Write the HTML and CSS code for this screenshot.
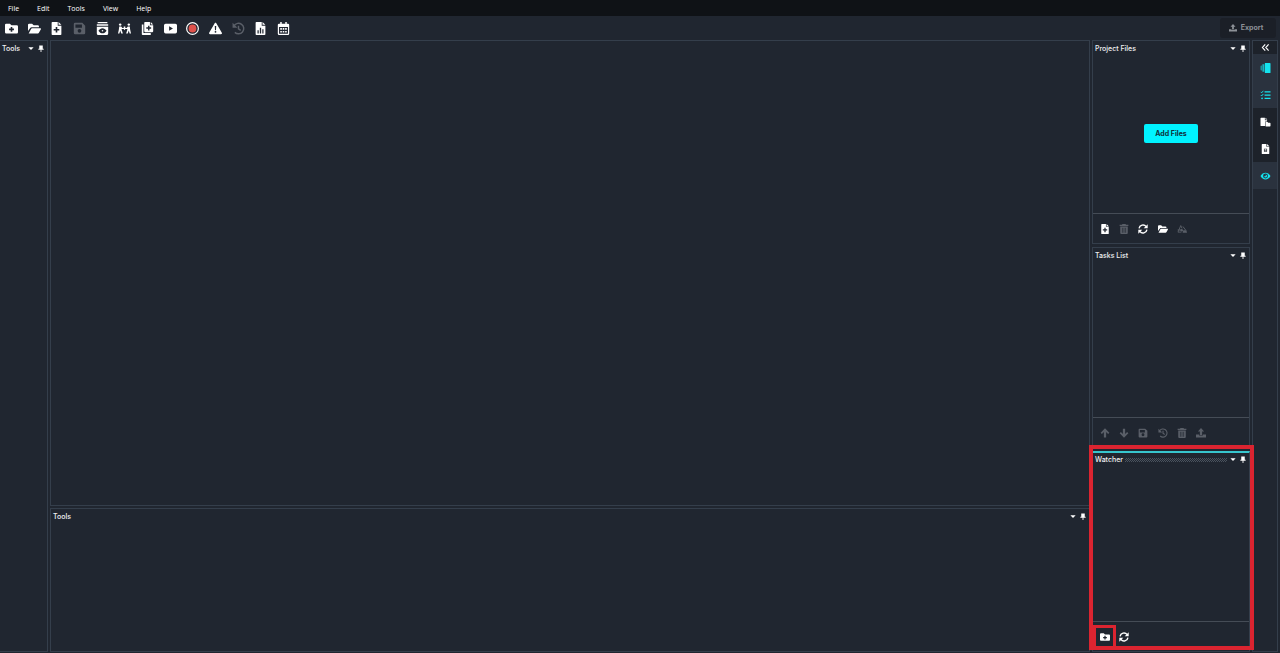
FILE: index.html
```html
<!DOCTYPE html>
<html lang="en">
<head>
    <meta charset="UTF-8">
    <meta name="viewport" content="width=device-width, initial-scale=1.0">
    <title>Workspace</title>
    <link rel="stylesheet" href="styles.css">
</head>
<body>
    <!-- Icon set -->
    <svg class="sprite" aria-hidden="true">
        <symbol id="folder-plus" viewBox="0 0 16 16"><path fill-rule="evenodd" d="M1.500 2H6l2 2h6.500A1.500 1.500 0 0 1 16 5.500v7a1.500 1.500 0 0 1-1.500 1.500h-13A1.500 1.500 0 0 1 0 12.500v-9A1.500 1.500 0 0 1 1.500 2zM7 6v2H5v2h2v2h2v-2h2V8H9V6z"/></symbol>
        <symbol id="folder-open" viewBox="0 0 16 16"><path d="M0 11V3.500A1.500 1.500 0 0 1 1.500 2H5l2 2h5a1.500 1.500 0 0 1 1.500 1.500V6.500H4.500A2 2 0 0 0 2.700 7.500zM.8 14l3-5.500a1.500 1.500 0 0 1 1.200-.8h10.300c.6 0 .9.600.6 1.100l-2.500 4.500a1.500 1.500 0 0 1-1.200.7z"/></symbol>
        <symbol id="file-plus" viewBox="0 0 16 16"><path fill-rule="evenodd" d="M2 1a1 1 0 0 1 1-1h6.500v4.500H14V15a1 1 0 0 1-1 1H3a1 1 0 0 1-1-1zM7 6v2.500H4.500v2H7V13h2v-2.500h2.500v-2H9V6zM10.500 0L14 3.500h-3.500z"/></symbol>
        <symbol id="save" viewBox="0 0 16 16"><path fill-rule="evenodd" d="M2.500 1h9L15 4.500v9a1.500 1.500 0 0 1-1.500 1.500h-11A1.500 1.500 0 0 1 1 13.500v-11A1.500 1.500 0 0 1 2.500 1zM3 3v4h8V3zM8 8.500a2.300 2.300 0 1 0 0 4.600 2.300 2.300 0 0 0 0-4.600z"/></symbol>
        <symbol id="archive-eye" viewBox="0 0 16 16"><path fill-rule="evenodd" d="M2 0h12v1.500H2zM1 2.700h14v1.800H1zM1 5.700h14V14a2 2 0 0 1-2 2H3a2 2 0 0 1-2-2zM3 10.700c2.500 4.200 7.500 4.200 10 0-2.500-4.200-7.500-4.200-10 0z"/><circle cx="8" cy="10.700" r="1"/></symbol>
        <symbol id="people" viewBox="0 0 16 16"><circle cx="2.700" cy="3.200" r="1.500"/><circle cx="13.300" cy="3.200" r="1.500"/><path d="M1.500 5.500h2.400l1.600 1.800H7V5.500h2v1.800h1.500l1.600-1.800h2.400l.5 4 1 4.500h-1.700l-1-3.500-1.300 3.500H10l1.500-4.500v-1H9L8 10 7 8.500H4.500v1L6 14H4l-1.300-3.500-1 3.500H0l1-4.500z"/></symbol>
        <symbol id="copy-plus" viewBox="0 0 16 16"><path fill-rule="evenodd" d="M5 0h6v4h4v7.500a1 1 0 0 1-1 1H5a1 1 0 0 1-1-1V1a1 1 0 0 1 1-1zm3.700 4.500v2H6.500v1.700h2.200v2.200h1.700V8.200h2.100V6.500h-2.100v-2zM12 0l3 3h-3zM1 3h2v10.500h9V16H2a1 1 0 0 1-1-1z"/></symbol>
        <symbol id="video" viewBox="0 0 16 16"><path fill-rule="evenodd" d="M2 2h12a2 2 0 0 1 2 2v8a2 2 0 0 1-2 2H2a2 2 0 0 1-2-2V4a2 2 0 0 1 2-2zM6.300 5.300v5.400L11 8z"/></symbol>
        <symbol id="record" viewBox="0 0 16 16"><circle cx="8" cy="8" r="7.200" fill="none" stroke="currentColor" stroke-width="1.500"/><circle class="record-dot" cx="8" cy="8" r="4.800"/></symbol>
        <symbol id="warning" viewBox="0 0 16 16"><path fill-rule="evenodd" d="M7 1.500c.5-.8 1.500-.8 2 0l6.800 11.700c.4.800 0 1.800-1 1.800H1.200c-1 0-1.400-1-1-1.800zM7.100 5l.3 5h1.200l.3-5zM8 11a1.100 1.100 0 1 0 0 2.200A1.100 1.100 0 0 0 8 11z"/></symbol>
        <symbol id="history" viewBox="0 0 16 16"><path fill="none" stroke="currentColor" stroke-width="1.800" d="M2.500 4.500A6.500 6.500 0 1 1 3.500 12.800M8 4.500V8.500l2.700 1.800"/><path d="M.7 1v6h6z"/></symbol>
        <symbol id="file-chart" viewBox="0 0 16 16"><path fill-rule="evenodd" d="M2 1a1 1 0 0 1 1-1h6.500v4.500H14V15a1 1 0 0 1-1 1H3a1 1 0 0 1-1-1zM4.300 10v4h1.500v-4zM7.200 7v7h1.600V7zM10.200 9v5h1.500V9zM10.500 0L14 3.500h-3.500z"/></symbol>
        <symbol id="calendar" viewBox="0 0 16 16"><path fill-rule="evenodd" d="M4 0h1.800v2h4.400V0H12v2h1.500A1.500 1.500 0 0 1 15 3.500v11a1.500 1.500 0 0 1-1.500 1.500h-11A1.500 1.500 0 0 1 1 14.500v-11A1.500 1.500 0 0 1 2.500 2H4zM2.500 6v8.500h11V6z"/><path d="M4 7.500h2v2H4zM7 7.500h2v2H7zM10 7.500h2v2h-2zM4 11h2v2H4zM7 11h2v2H7zM10 11h2v2h-2z"/></symbol>
        <symbol id="upload" viewBox="0 0 16 16"><path d="M8 0l5 5.500H9.800V11H6.200V5.500H3zM0 10.500h5V12h6v-1.500h5V15H0z"/></symbol>
        <symbol id="caret" viewBox="0 0 16 16"><path d="M2 5h12l-6 6.500z"/></symbol>
        <symbol id="pin" viewBox="0 0 16 16"><path d="M4 1h8v7.500h2V11H9v5H7v-5H2V8.500h2z"/></symbol>
        <symbol id="chevrons" viewBox="0 0 16 16"><path fill="none" stroke="currentColor" stroke-width="2" d="M7.500 2.500L2.500 8l5 5.500M13.500 2.500L8.500 8l5 5.500"/></symbol>
        <symbol id="cards" viewBox="0 0 16 16"><path d="M7 0h8a1 1 0 0 1 1 1v14a1 1 0 0 1-1 1H7z"/><path opacity=".75" d="M3 2h3.200v12H4a1 1 0 0 1-1-1z"/><path opacity=".6" d="M0 5.500A1.500 1.500 0 0 1 1.500 4H2.300v8h-.8A1.500 1.500 0 0 1 0 10.500z"/></symbol>
        <symbol id="checklist" viewBox="0 0 16 16"><path fill="none" stroke="currentColor" stroke-width="1.500" d="M.5 3l1.300 1.500L4.500 1.300M.5 8l1.300 1.500 2.700-3.200"/><circle cx="2.500" cy="13.300" r="1.400"/><path d="M6.500 2H16v1.800H6.500zM6.500 7.200H16V9H6.500zM6.500 12.400H16v1.800H6.500z"/></symbol>
        <symbol id="file-folder" viewBox="0 0 16 16"><path d="M0 2a1 1 0 0 1 1-1h6v4h3.500v2H7.500v7.500H1a1 1 0 0 1-1-1zM8 1l3 3H8zM8.300 8h3l1 1.200H15a1 1 0 0 1 1 1V14a1 1 0 0 1-1 1H8.300z"/></symbol>
        <symbol id="file-lines" viewBox="0 0 16 16"><path fill-rule="evenodd" d="M2 1a1 1 0 0 1 1-1h6.500v4.500H14V15a1 1 0 0 1-1 1H3a1 1 0 0 1-1-1zM5.500 7.500v5h5v-5zM10.500 0L14 3.500h-3.500z"/><path d="M6.500 8.500h3v1h-3zM6.500 10.500h3v1h-3z"/></symbol>
        <symbol id="eye" viewBox="0 0 16 16"><path fill-rule="evenodd" d="M0 8c3.500-7.200 12.500-7.200 16 0-3.500 7.200-12.500 7.200-16 0zm8-3.900a3.900 3.900 0 1 0 0 7.800 3.900 3.900 0 0 0 0-7.800z"/><path d="M8 5.500A2.500 2.500 0 1 1 5.500 8 1.500 1.500 0 0 0 8 5.500z"/></symbol>
        <symbol id="trash" viewBox="0 0 16 16"><path fill-rule="evenodd" d="M5.500 0h5l.7 1H15v2H1V1h3.800zM2 4h12v10.500a1.500 1.500 0 0 1-1.500 1.500h-9A1.500 1.500 0 0 1 2 14.500zM4.700 6v8h1V6zM7.500 6v8h1V6zM10.300 6v8h1V6z"/></symbol>
        <symbol id="refresh" viewBox="0 0 16 16"><path fill="none" stroke="currentColor" stroke-width="2.200" d="M1.700 7A6.300 6.300 0 0 1 13 4.200M14.300 9A6.300 6.300 0 0 1 3 11.800"/><path d="M15.500.5v6.300H9.200zM.5 15.500V9.200h6.300z"/></symbol>
        <symbol id="shapes" viewBox="0 0 16 16"><path fill="none" stroke="currentColor" stroke-width="1.500" d="M1.500 13L6 2.500l2 4.500M1 9.500h6M1.500 13H7M9.500 4l4.500 6"/><circle cx="7.500" cy="10" r="2"/><path d="M10 10h5l1 4H9z"/></symbol>
        <symbol id="arrow-up" viewBox="0 0 16 16"><path d="M8 .5l7 7-2 2L9.800 6.500V15H6.200V6.500L3 9.500l-2-2z"/></symbol>
        <symbol id="arrow-down" viewBox="0 0 16 16"><path d="M8 15.500l7-7-2-2-3.200 3V1H6.200v8.500L3 6.500l-2 2z"/></symbol>
    </svg>

    <!-- Menu -->
    <nav class="menubar">
        <button>File</button>
        <button>Edit</button>
        <button>Tools</button>
        <button>View</button>
        <button>Help</button>
    </nav>

    <!-- Main toolbar -->
    <header class="toolbar">
        <div class="toolbar-icons">
            <button aria-label="New project"><svg><use href="#folder-plus"/></svg></button>
            <button aria-label="Open project"><svg><use href="#folder-open"/></svg></button>
            <button aria-label="Add file"><svg><use href="#file-plus"/></svg></button>
            <button aria-label="Save" disabled><svg><use href="#save"/></svg></button>
            <button aria-label="Preview archive"><svg><use href="#archive-eye"/></svg></button>
            <button aria-label="Interview"><svg><use href="#people"/></svg></button>
            <button aria-label="Duplicate"><svg><use href="#copy-plus"/></svg></button>
            <button aria-label="Video"><svg><use href="#video"/></svg></button>
            <button aria-label="Record"><svg><use href="#record"/></svg></button>
            <button aria-label="Warnings"><svg><use href="#warning"/></svg></button>
            <button aria-label="History" disabled><svg><use href="#history"/></svg></button>
            <button aria-label="Report"><svg><use href="#file-chart"/></svg></button>
            <button aria-label="Calendar"><svg><use href="#calendar"/></svg></button>
        </div>
        <button class="export-btn" disabled><svg><use href="#upload"/></svg>Export</button>
    </header>

    <main class="workspace">
        <!-- Left dock -->
        <section class="panel panel-left">
            <div class="panel-head">
                <h2>Tools</h2>
                <span class="grip"></span>
                <button aria-label="Tools menu"><svg><use href="#caret"/></svg></button>
                <button aria-label="Pin Tools"><svg><use href="#pin"/></svg></button>
            </div>
        </section>

        <!-- Document area -->
        <div class="center">
            <section class="panel"></section>
            <section class="panel">
                <div class="panel-head">
                    <h2>Tools</h2>
                    <span class="grip"></span>
                    <button aria-label="Tools menu"><svg><use href="#caret"/></svg></button>
                    <button aria-label="Pin Tools"><svg><use href="#pin"/></svg></button>
                </div>
            </section>
        </div>

        <!-- Right dock -->
        <div class="dock">
            <section class="panel">
                <div class="panel-head">
                    <h2>Project Files</h2>
                    <span class="grip"></span>
                    <button aria-label="Project Files menu"><svg><use href="#caret"/></svg></button>
                    <button aria-label="Pin Project Files"><svg><use href="#pin"/></svg></button>
                </div>
                <div class="panel-body">
                    <button class="add-btn">Add Files</button>
                </div>
                <div class="panel-foot">
                    <button aria-label="Add file"><svg><use href="#file-plus"/></svg></button>
                    <button aria-label="Delete file" disabled><svg><use href="#trash"/></svg></button>
                    <button aria-label="Refresh files"><svg><use href="#refresh"/></svg></button>
                    <button aria-label="Open folder"><svg><use href="#folder-open"/></svg></button>
                    <button aria-label="Shapes" disabled><svg><use href="#shapes"/></svg></button>
                </div>
            </section>

            <section class="panel">
                <div class="panel-head">
                    <h2>Tasks List</h2>
                    <span class="grip"></span>
                    <button aria-label="Tasks List menu"><svg><use href="#caret"/></svg></button>
                    <button aria-label="Pin Tasks List"><svg><use href="#pin"/></svg></button>
                </div>
                <div class="panel-body"></div>
                <div class="panel-foot">
                    <button aria-label="Move up" disabled><svg><use href="#arrow-up"/></svg></button>
                    <button aria-label="Move down" disabled><svg><use href="#arrow-down"/></svg></button>
                    <button aria-label="Save tasks" disabled><svg><use href="#save"/></svg></button>
                    <button aria-label="Restore tasks" disabled><svg><use href="#history"/></svg></button>
                    <button aria-label="Delete task" disabled><svg><use href="#trash"/></svg></button>
                    <button aria-label="Upload tasks" disabled><svg><use href="#upload"/></svg></button>
                </div>
            </section>

            <section class="panel watcher">
                <div class="panel-head">
                    <h2>Watcher</h2>
                    <span class="grip dotted"></span>
                    <button aria-label="Watcher menu"><svg><use href="#caret"/></svg></button>
                    <button aria-label="Pin Watcher"><svg><use href="#pin"/></svg></button>
                </div>
                <div class="panel-body"></div>
                <div class="panel-foot">
                    <button class="marked" aria-label="Add watch folder"><svg><use href="#folder-plus"/></svg></button>
                    <button aria-label="Refresh watcher"><svg><use href="#refresh"/></svg></button>
                </div>
            </section>
        </div>

        <!-- Panel switches -->
        <aside class="sidebar">
            <button class="collapse" aria-label="Collapse"><svg><use href="#chevrons"/></svg></button>
            <button class="active" aria-label="Project files"><svg><use href="#cards"/></svg></button>
            <button class="active" aria-label="Tasks list"><svg><use href="#checklist"/></svg></button>
            <button aria-label="File browser"><svg><use href="#file-folder"/></svg></button>
            <button aria-label="File details"><svg><use href="#file-lines"/></svg></button>
            <button class="active" aria-label="Watcher"><svg><use href="#eye"/></svg></button>
        </aside>
    </main>
</body>
</html>
```
FILE: styles.css
```css
/* General */
* {
    box-sizing: border-box;
}
body {
    display: flex;
    flex-direction: column;
    height: 100vh;
    margin: 0;
    background-color: #202630;
    color: #f0f1f3;
    font-family: Inter, Arial, sans-serif;
    font-size: 7px;
    line-height: 10px;
}
button {
    display: flex;
    align-items: center;
    justify-content: center;
    padding: 0;
    border: none;
    background: none;
    color: #ffffff;
    font: inherit;
    cursor: pointer;
}
button:disabled {
    color: #5a5f68;
    cursor: default;
}
svg {
    display: block;
    width: 11px;
    height: 11px;
    fill: currentColor;
}
.sprite {
    display: none;
}

/* Menu */
.menubar {
    display: flex;
    gap: 18px;
    height: 16px;
    padding: 2px 8px 0;
    background-color: #0f1216;
    font-family: "Open Sans", sans-serif;
}

/* Main toolbar */
.toolbar {
    display: flex;
    justify-content: space-between;
    align-items: center;
    height: 24px;
    padding-right: 4px;
}
.toolbar-icons {
    display: grid;
    grid-template-columns: repeat(13, 1fr);
    width: 295px;
}
.toolbar-icons svg {
    width: 13px;
    height: 13px;
}
.record-dot {
    fill: #e0524c;
}
.export-btn {
    gap: 4px;
    width: 56px;
    height: 20px;
    padding-right: 4px;
    border-radius: 3px;
    background-color: #1b1f27;
    font-weight: 700;
}
.export-btn:disabled {
    color: #8d9197;
}
.export-btn svg {
    width: 8px;
    height: 8px;
}

/* Workspace */
.workspace {
    display: flex;
    flex: 1;
    min-height: 0;
    padding: 0 2px 1px 0;
}
.center {
    display: grid;
    flex: 1;
    grid-template-rows: 1fr 144px;
    gap: 2px;
    margin: 0 2px;
}
.dock {
    display: grid;
    grid-template-rows: 204fr 201fr 201fr;
    gap: 3px;
    width: 158px;
    margin-right: 2px;
}

/* Panels */
.panel {
    display: flex;
    flex-direction: column;
    border: 1px solid #343e4b;
}
.panel-left {
    width: 48px;
    border-left: none;
}
.panel-head {
    display: flex;
    align-items: center;
    gap: 2px;
    height: 15px;
    padding: 0 2px;
}
.panel-head h2 {
    margin: 0;
    font-size: 7px;
    font-weight: 500;
}
.panel-head svg {
    width: 8px;
    height: 7px;
}
.grip {
    flex: 1;
    height: 4px;
}
.dotted {
    background: repeating-conic-gradient(#4a535e 0 25%, transparent 0 50%) 0 0 / 2px 2px;
}
.panel-body {
    display: flex;
    flex: 1;
    align-items: center;
    justify-content: center;
}
.add-btn {
    width: 54px;
    height: 19px;
    margin-bottom: 2px;
    border-radius: 2px;
    background-color: #00f3ff;
    color: #10303a;
    font-weight: 700;
}
.panel-foot {
    display: grid;
    grid-template-columns: repeat(6, 1fr);
    align-items: center;
    width: 100%;
    height: 30px;
    padding: 0 38px 0 2px;
    border-top: 1px solid #454c56;
}
.panel-foot svg {
    width: 10px;
    height: 10px;
}

/* Watcher with highlight frame */
.watcher {
    position: relative;
    border-top: 2px solid #37c6ce;
}
.watcher .panel-head {
    height: 13px;
}
.watcher::after {
    content: "";
    position: absolute;
    inset: -8px -5px 1px -4px;
    border: 4px solid #db2430;
    pointer-events: none;
}
.marked {
    position: relative;
}
.marked::after {
    content: "";
    position: absolute;
    inset: -7px -2px;
    border: 3px solid #db2430;
}

/* Panel switches */
.sidebar {
    width: 26px;
    border: 1px solid #343e4b;
}
.sidebar button {
    width: 100%;
    height: 27px;
    background-color: #1d222a;
}
.sidebar .collapse {
    height: 13px;
}
.sidebar .active {
    background-color: #2a323e;
    color: #14e3ee;
}
.sidebar svg {
    width: 11px;
    height: 10px;
}
.sidebar .collapse svg {
    width: 9px;
    height: 9px;
}
```
